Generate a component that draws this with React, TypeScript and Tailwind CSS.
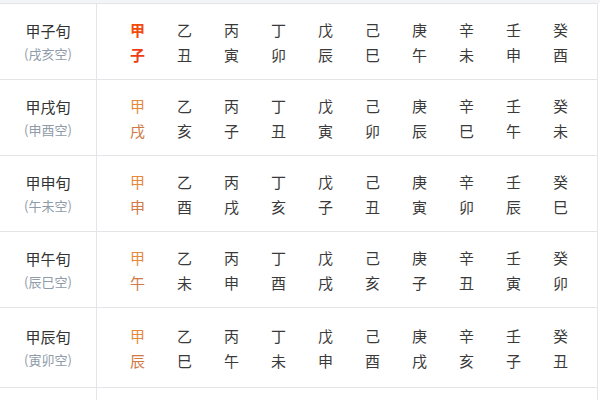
import React from 'react';

const stems = ['甲', '乙', '丙', '丁', '戊', '己', '庚', '辛', '壬', '癸'];

const rows = [
  { name: '甲子旬', kong: '(戌亥空)', branches: ['子', '丑', '寅', '卯', '辰', '巳', '午', '未', '申', '酉'] },
  { name: '甲戌旬', kong: '(申酉空)', branches: ['戌', '亥', '子', '丑', '寅', '卯', '辰', '巳', '午', '未'] },
  { name: '甲申旬', kong: '(午未空)', branches: ['申', '酉', '戌', '亥', '子', '丑', '寅', '卯', '辰', '巳'] },
  { name: '甲午旬', kong: '(辰巳空)', branches: ['午', '未', '申', '酉', '戌', '亥', '子', '丑', '寅', '卯'] },
  { name: '甲辰旬', kong: '(寅卯空)', branches: ['辰', '巳', '午', '未', '申', '酉', '戌', '亥', '子', '丑'] },
];

export default function App() {
  return (
    <div
      className="w-[600px] h-[400px] overflow-hidden bg-white"
      style={{ fontFamily: '"Noto Sans CJK SC", "Noto Sans", sans-serif' }}
    >
      <div className="h-[3px] bg-[#f3f4f6]" />
      <div className="w-[598px] border-t border-r border-[#e3e5e8]">
        {rows.map((row, i) => (
          <div key={row.name} className={`flex border-b border-[#e3e5e8] ${i === 4 ? 'h-[80px]' : 'h-[76px]'}`}>
            <div className="w-[97px] shrink-0 border-r border-[#e3e5e8] flex flex-col items-center justify-center">
              <div className="text-[15px] leading-[24px] text-[#333]">{row.name}</div>
              <div className="text-[13px] leading-[22px] text-[#8f9ba8]">{row.kong}</div>
            </div>
            <div className="flex items-center pl-[17px]">
              {stems.map((s, j) => (
                <div key={s} className="w-[47px] flex flex-col items-center text-[15px] leading-[25px]">
                  <span
                    className={
                      j === 0
                        ? i === 0
                          ? 'font-bold text-[#f24a0a]'
                          : 'text-[#e38a3c]'
                        : 'text-[#3a3a3a]'
                    }
                  >
                    {s}
                  </span>
                  <span
                    className={
                      j === 0
                        ? i === 0
                          ? 'font-bold text-[#ee3d12]'
                          : 'text-[#cf7a45]'
                        : 'text-[#3a3a3a]'
                    }
                  >
                    {row.branches[j]}
                  </span>
                </div>
              ))}
            </div>
          </div>
        ))}
        <div className="flex h-[40px]">
          <div className="w-[97px] shrink-0 border-r border-[#e3e5e8]" />
        </div>
      </div>
    </div>
  );
}
